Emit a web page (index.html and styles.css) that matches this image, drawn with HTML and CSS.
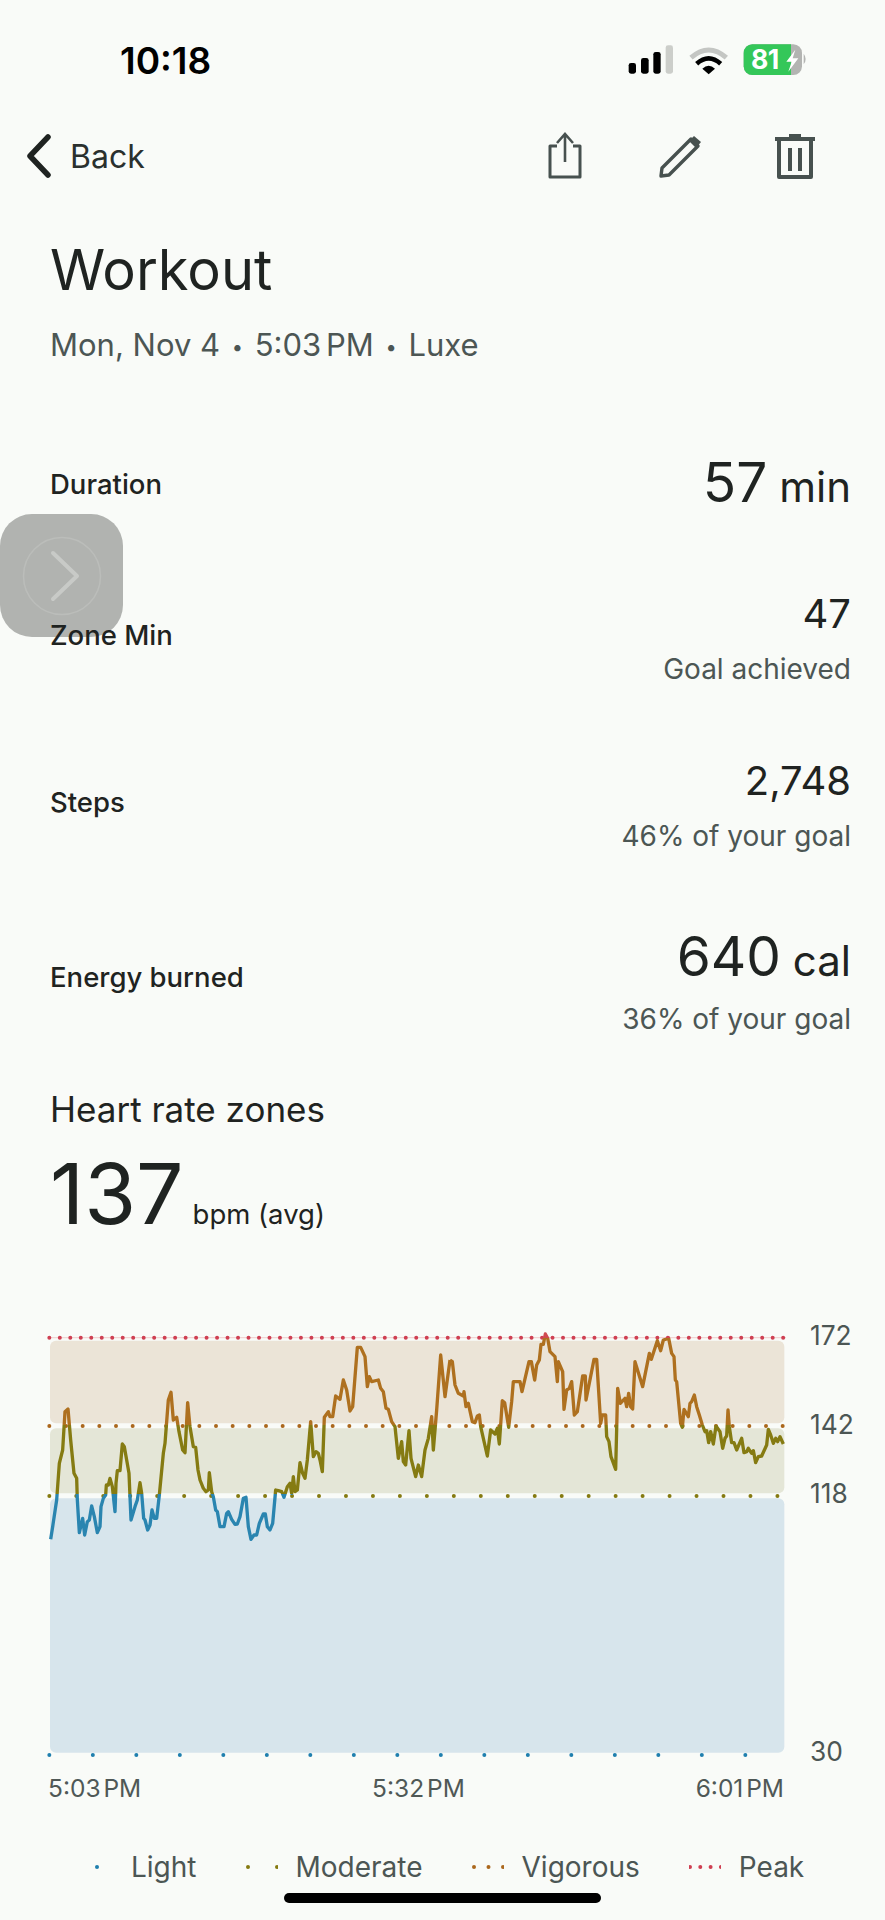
FILE: index.html
```html
<!DOCTYPE html>
<html lang="en">
  <head>
    <meta charset="UTF-8" />
    <meta name="viewport" content="width=device-width, initial-scale=1.0" />
    <title>Workout</title>
    <link rel="stylesheet" href="styles.css">
  </head>
  <body>
    <div class="status-bar">
      <span class="clock">10:18</span>
      <svg class="status-icons" width="165" height="40" viewBox="0 0 495 120">
        <rect x="5" y="48" width="22" height="32" rx="7" fill="#000" />
        <rect x="42" y="33" width="23" height="47" rx="7" fill="#000" />
        <rect x="79" y="15" width="22" height="65" rx="7" fill="#000" />
        <rect x="116" y="-5" width="22" height="85" rx="7" fill="#ccceca" />
        <path d="M192 32 Q245 -14 298 32" fill="none" stroke="#c4c6c3" stroke-width="15" />
        <path d="M209 50 Q245 18 281 50" fill="none" stroke="#000" stroke-width="14" />
        <path d="M226 65 Q245 48 264 65 L245 82 Z" fill="#000" />
        <rect x="350" y="-8" width="175" height="92" rx="26" fill="#b3b4b2" />
        <path d="M376 -8 H492 V84 H376 A26 26 0 0 1 350 58 V18 A26 26 0 0 1 376 -8 Z" fill="#34c759" />
        <text class="battery-text" x="372" y="67">81</text>
        <path d="M505 8 L478 44 H494 L484 74 L514 34 H497 Z" fill="#fff" />
        <path d="M530 20 Q542 36 530 52 Z" fill="#b3b4b2" />
      </svg>
    </div>

    <div class="nav">
      <div class="back">
        <svg width="26" height="44" viewBox="0 0 26 44">
          <path d="M22 3 L4 22 L22 41" fill="none" stroke="#1f2321" stroke-width="5.500" stroke-linecap="round" stroke-linejoin="round" />
        </svg>
        <span>Back</span>
      </div>
      <div class="nav-actions">
        <svg width="48" height="48" viewBox="0 0 48 48">
          <path d="M16 14 H9 V45 H39 V14 H32" fill="none" stroke="#47514f" stroke-width="3" stroke-linejoin="round" />
          <path d="M24 30 V3 M16 11 L24 2 L32 11" fill="none" stroke="#47514f" stroke-width="2.600" />
        </svg>
        <svg width="48" height="48" viewBox="0 0 48 48">
          <path d="M5 44 L6 36 L35 7 L42 14 L13 43 Z" fill="none" stroke="#47514f" stroke-width="3.400" stroke-linejoin="round" />
          <path d="M33 9 L38 4 L45 10 L40 16 Z" fill="#47514f" />
        </svg>
        <svg width="48" height="48" viewBox="0 0 48 48">
          <path d="M4 7 H44 M18 4 H30" fill="none" stroke="#47514f" stroke-width="4" />
          <path d="M8 8 V45 H40 V8" fill="none" stroke="#47514f" stroke-width="4" stroke-linejoin="round" />
          <path d="M19 16 V39 M29 16 V39" fill="none" stroke="#47514f" stroke-width="4" />
        </svg>
      </div>
    </div>

    <h1 class="title">Workout</h1>
    <p class="subtitle">Mon, Nov 4 <span class="sep">•</span> <span class="time">5:03 PM</span> <span class="sep">•</span> Luxe</p>

    <!-- assistive touch button, sits behind the rows -->
    <div class="touch-button">
      <svg width="123" height="123" viewBox="0 0 123 123">
        <circle cx="62" cy="62" r="38.500" fill="none" stroke="#bbbdba" stroke-width="1.500" />
        <path d="M53 39 L77 62 L53 85" fill="none" stroke="#c8cac7" stroke-width="4" stroke-linecap="round" stroke-linejoin="round" />
      </svg>
    </div>

    <div class="stats">
      <div class="row row-duration">
        <span class="label">Duration</span>
        <div class="value-box"><div class="value"><b class="big">57</b> min</div></div>
      </div>
      <div class="row row-zone">
        <span class="label">Zone Min</span>
        <div class="value-box">
          <div class="value value-sm">47</div>
          <div class="note">Goal achieved</div>
        </div>
      </div>
      <div class="row row-steps">
        <span class="label">Steps</span>
        <div class="value-box">
          <div class="value value-md">2,748</div>
          <div class="note">46% of your goal</div>
        </div>
      </div>
      <div class="row row-energy">
        <span class="label">Energy burned</span>
        <div class="value-box">
          <div class="value"><b class="big">640</b> cal</div>
          <div class="note">36% of your goal</div>
        </div>
      </div>
    </div>

    <h2 class="zones-title">Heart rate zones</h2>
    <div class="avg"><span class="avg-num">137</span><span class="avg-unit">bpm (avg)</span></div>

    <svg class="chart" width="885" height="460" viewBox="0 0 2655 1380">
      <defs>
        <linearGradient id="zoneLine" gradientUnits="userSpaceOnUse" x1="0" y1="0" x2="0" y2="1380">
          <stop offset="0.0601" stop-color="#cf4a50" />
          <stop offset="0.0601" stop-color="#ae701f" />
          <stop offset="0.25" stop-color="#ae701f" />
          <stop offset="0.25" stop-color="#857b12" />
          <stop offset="0.4" stop-color="#857b12" />
          <stop offset="0.4" stop-color="#2a85b0" />
        </linearGradient>
      </defs>
      <rect x="150" y="92" width="2203" height="248" rx="18" fill="#ebe4d7" />
      <rect x="150" y="355" width="2203" height="195" rx="18" fill="#e4e6d7" />
      <rect x="150" y="565" width="2203" height="763" rx="18" fill="#d7e5ec" />
      <line x1="148" y1="83" x2="2358" y2="83" stroke="#f1d5d4" stroke-width="4" />
      <line class="dots" x1="148" y1="83" x2="2358" y2="83" stroke="#cf3f52" stroke-dasharray="0 31.450" />
      <line class="dots" x1="148" y1="348" x2="2358" y2="348" stroke="#ab671c" stroke-dasharray="0 50" />
      <line class="dots" x1="148" y1="558" x2="2340" y2="558" stroke="#857a10" stroke-dasharray="0 80.900" />
      <line class="dots" x1="148" y1="1335" x2="2240" y2="1335" stroke="#1f7fae" stroke-dasharray="0 130.500" />
      <polyline class="hr-line" points="152,688 158,650 170,570 178,460 188,420 195,305 204,297 212,390 222,490 230,505 232,570 238,668 248,625 254,675 262,635 268,630 275,588 283,620 292,668 300,650 303,590 310,565 317,555 319,525 325,525 330,505 337,530 345,605 348,520 352,482 360,482 367,402 373,410 380,450 387,490 393,630 405,590 412,570 420,518 425,550 431,625 435,630 443,660 450,645 456,600 463,625 470,625 478,555 490,430 495,400 505,270 513,247 520,330 530,322 537,365 548,420 555,428 563,278 570,350 580,410 587,412 594,480 600,510 610,535 618,545 625,540 628,488 635,545 640,560 647,600 652,605 660,650 672,650 680,610 685,605 695,628 705,643 712,642 720,620 730,565 738,562 745,650 753,688 762,675 770,675 778,640 790,612 796,612 802,650 810,660 818,640 827,540 835,542 845,545 852,562 862,530 870,520 875,550 880,500 885,545 892,540 900,458 908,490 915,505 922,450 932,335 940,440 948,425 955,430 960,450 967,485 973,322 985,305 990,320 998,320 1007,258 1020,268 1030,210 1040,240 1050,303 1058,290 1072,112 1082,112 1095,140 1102,230 1108,200 1115,215 1135,210 1142,235 1150,245 1158,295 1165,298 1175,335 1185,350 1195,445 1205,395 1210,455 1217,465 1227,362 1233,445 1247,500 1255,465 1265,500 1275,420 1285,385 1295,320 1300,420 1310,300 1322,135 1335,260 1350,150" />
      <polyline class="hr-line" transform="translate(1320 0)" points="30,150 37,155 45,225 55,250 70,258 72,245 78,290 85,280 97,335 105,338 112,318 118,315 122,350 142,438 152,360 165,372 172,355 178,402 187,272 194,278 206,352 215,275 220,215 240,215 246,245 267,155 274,155 284,210 290,165 298,150 303,103 310,103 316,72 323,85 330,125 345,140 352,215 355,155 368,185 372,298 380,240 388,235 395,215 403,315 412,305 428,198 436,198 438,270 462,148 470,148 482,340 487,315 497,315 500,380 507,395 513,440 527,478 533,235 541,280 555,265 560,290 566,250 572,290 578,297 585,155 608,230 628,130 634,148 652,92 662,122 670,90 686,85 695,130 702,140 706,210 710,215 722,340 727,352 732,298 745,320 750,280 755,275 763,255 770,290 778,315 787,345 795,365 800,362 806,398 812,365 820,402 828,348 840,365 848,415 855,385 860,378 864,300 868,350 875,398 882,398 890,420 905,385 912,428 920,425 925,415 935,430 940,422 947,458 955,440 965,438 980,405 985,358 992,375 1000,400 1007,385 1013,395 1020,380 1030,402" />
      <text class="y-label" x="2430" y="106">172</text>
      <text class="y-label" x="2430" y="371">142</text>
      <text class="y-label" x="2430" y="580">118</text>
      <text class="y-label" x="2430" y="1354">30</text>
    </svg>

    <div class="x-axis">
      <span class="time">5:03 PM</span>
      <span class="time">5:32 PM</span>
      <span class="time">6:01 PM</span>
    </div>

    <div class="legend">
      <div class="legend-item">
        <svg width="32" height="8"><line class="key" x1="16" y1="4" x2="32" y2="4" stroke="#1f7fae" stroke-dasharray="0 40" /></svg>
        <span>Light</span>
      </div>
      <div class="legend-item">
        <svg width="32" height="8"><line class="key" x1="2" y1="4" x2="32" y2="4" stroke="#857a10" stroke-dasharray="0 29" /></svg>
        <span>Moderate</span>
      </div>
      <div class="legend-item">
        <svg width="32" height="8"><line class="key" x1="2" y1="4" x2="32" y2="4" stroke="#ab671c" stroke-dasharray="0 14.500" /></svg>
        <span>Vigorous</span>
      </div>
      <div class="legend-item">
        <svg width="32" height="8"><line class="key" x1="1" y1="4" x2="33" y2="4" stroke="#cf3f52" stroke-dasharray="0 10.300" /></svg>
        <span>Peak</span>
      </div>
    </div>

    <div class="home-bar"></div>
  </body>
</html>
```

FILE: styles.css
```css
body {
  font-family: Inter, Roboto, sans-serif;
  background-color: #f9fbf8;
  color: #1f2321;
  margin: 0;
  width: 885px;
  height: 1920px;
  position: relative;
  overflow: hidden;
}

.status-bar {
  height: 120px;
  display: flex;
  align-items: center;
  justify-content: space-between;
  padding-left: 120px;
  padding-right: 93px;
  box-sizing: border-box;
}

.clock {
  font-size: 37px;
  font-weight: 600;
  color: #000;
}

.status-icons {
  overflow: visible;
  margin-top: 13px;
}

.battery-text {
  font-weight: 700;
  font-size: 80px;
  letter-spacing: -2px;
  fill: #fff;
}

.nav {
  height: 72px;
  display: flex;
  align-items: center;
  justify-content: space-between;
  padding-left: 26px;
  padding-right: 66px;
}

.back {
  display: flex;
  align-items: center;
  gap: 18px;
  font-size: 32px;
  color: #2a302e;
}

.nav-actions {
  display: flex;
  gap: 67px;
}

.title {
  font-size: 56px;
  font-weight: 400;
  margin: 45px 0 0 50px;
  line-height: 66px;
}

.subtitle {
  font-size: 31px;
  color: #4c5654;
  margin: 22px 0 0 50px;
  line-height: 40px;
}

.sep {
  font-size: 20px;
  margin: 0 3px;
  vertical-align: 2px;
}

.time {
  word-spacing: -4px;
}

.touch-button {
  position: absolute;
  left: 0;
  top: 514px;
  width: 123px;
  height: 123px;
  border-radius: 32px;
  background-color: #b1b3b0;
}

.stats {
  position: relative;
  padding: 0 34px 0 50px;
  margin-top: 85px;
}

.row {
  display: flex;
  justify-content: space-between;
  align-items: center;
}

.label {
  font-size: 27.500px;
  font-weight: 500;
  margin-bottom: 8px;
}

.row-duration .label {
  margin-bottom: 2px;
}

.row-energy .label {
  margin-bottom: 12px;
}

.value-box {
  text-align: right;
}

.value {
  font-size: 42px;
  line-height: 60px;
}

.big {
  font-weight: 400;
  font-size: 55px;
}

.value-sm,
.value-md {
  font-size: 40px;
  line-height: 50px;
}

.note {
  font-size: 28px;
  color: #4c5654;
  line-height: 40px;
  margin-top: 10px;
}

.row-energy .note {
  margin-top: 8px;
}

.row-zone {
  margin-top: 72px;
}

.row-steps {
  margin-top: 67px;
}

.row-energy {
  margin-top: 70px;
}

.zones-title {
  font-size: 35px;
  font-weight: 400;
  margin: 48px 0 0 50px;
  line-height: 44px;
}

.avg {
  display: flex;
  align-items: baseline;
  gap: 9px;
  margin-left: 50px;
  margin-top: 11px;
}

.avg-num {
  font-size: 84px;
  line-height: 104px;
}

.avg-unit {
  font-size: 27.500px;
}

.chart {
  position: absolute;
  left: 0;
  top: 1310px;
}

.dots {
  stroke-width: 12;
  stroke-linecap: round;
}

.hr-line {
  fill: none;
  stroke: url(#zoneLine);
  stroke-width: 10;
  stroke-linejoin: round;
}

.y-label {
  font-size: 79px;
  fill: #4c5654;
}

.x-axis {
  position: absolute;
  left: 48px;
  top: 1772px;
  width: 736px;
  display: flex;
  justify-content: space-between;
  font-size: 24.500px;
  color: #4f5856;
  line-height: 32px;
}

.legend {
  position: absolute;
  left: 81px;
  top: 1848px;
  display: flex;
  gap: 49px;
  font-size: 28px;
  color: #4c5654;
  line-height: 38px;
}

.legend-item {
  display: flex;
  align-items: center;
  gap: 18px;
}

.key {
  stroke-width: 4;
  stroke-linecap: round;
}

.home-bar {
  position: absolute;
  left: 284px;
  top: 1893px;
  width: 317px;
  height: 10px;
  border-radius: 5px;
  background-color: #000;
}
```
